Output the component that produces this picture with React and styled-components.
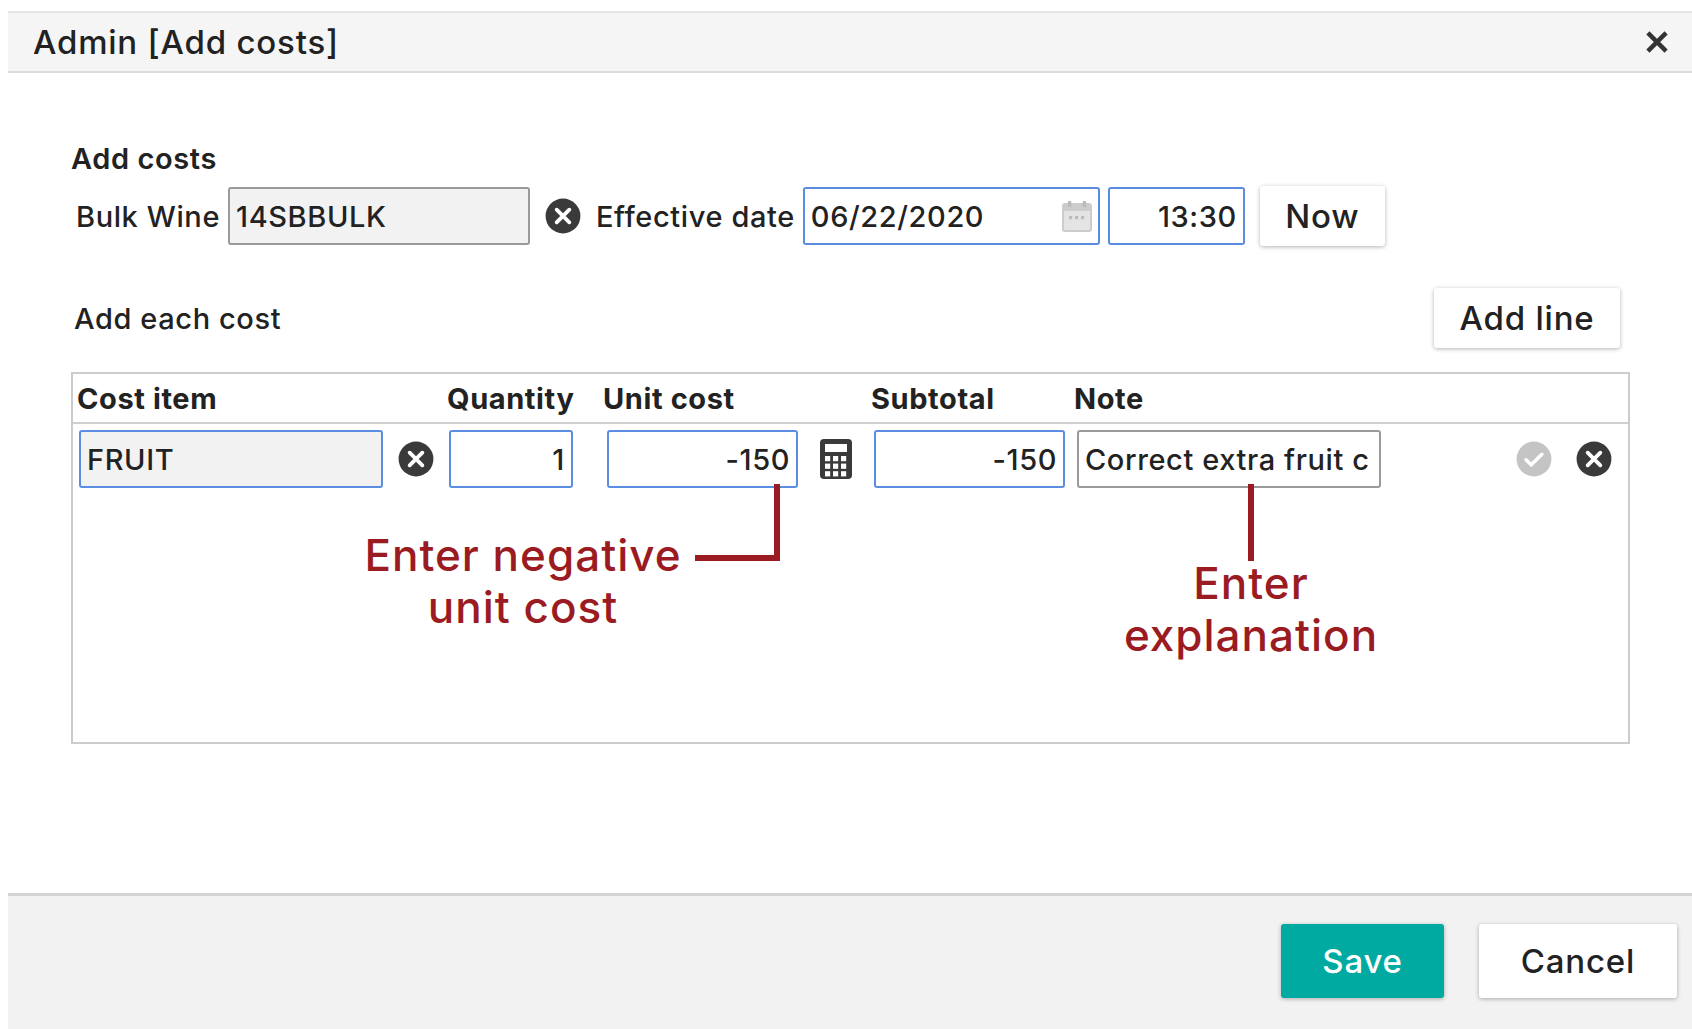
import React from "react";
import styled, { createGlobalStyle } from "styled-components";

const G = createGlobalStyle`
  html,body{margin:0;padding:0;background:#fff;}
  body{padding:11px 0 0 8px;font-family:Inter,"Noto Sans",sans-serif;color:#222;letter-spacing:0.6px;}
`;
const Dialog = styled.div`width:1684px;height:1018px;display:flex;flex-direction:column;border-top:2px solid #e4e4e4;`;
const Header = styled.div`height:58px;background:#f5f5f5;border-bottom:2px solid #dcdcdc;display:flex;align-items:center;justify-content:space-between;padding:0 22px 0 25px;`;
const Title = styled.div`font-size:33px;font-weight:500;letter-spacing:0.8px;`;
const Body = styled.div`flex:1;padding:68px 72px 0 63px;position:relative;`;
const Section = styled.div`font-size:29px;font-weight:600;margin-bottom:10px;`;
const Row = styled.div`display:flex;align-items:center;gap:${p=>p.gap||8}px;`;
const Label = styled.span`font-size:29px;font-weight:500;margin-left:${p=>p.ml||0}px;`;
const Input = styled.div`box-sizing:border-box;width:${p=>p.w}px;height:${p=>p.h||58}px;border:2px solid ${p=>p.blue?"#5b8de0":"#9a9a9a"};border-radius:3px;background:${p=>p.bg||"#fff"};display:flex;align-items:center;justify-content:${p=>p.right?"flex-end":"space-between"};padding:0 6px;font-size:29px;font-weight:500;white-space:nowrap;overflow:hidden;`;
const Btn = styled.button`font-family:inherit;letter-spacing:0.8px;font-size:33px;font-weight:500;color:${p=>p.primary?"#fff":"#222"};background:${p=>p.primary?"#00aaa0":"#fff"};border:none;border-radius:3px;box-shadow:0 1px 4px rgba(0,0,0,.3);width:${p=>p.w}px;height:${p=>p.h}px;`;
const SubRow = styled.div`display:flex;justify-content:space-between;align-items:center;margin:42px 0 24px 3px;`;
const Table = styled.div`box-sizing:border-box;width:1559px;height:372px;border:2px solid #ccc;position:relative;`;
const THead = styled.div`display:flex;height:48px;align-items:center;border-bottom:2px solid #d0d0d0;font-size:29px;font-weight:700;padding-left:4px;`;
const Th = styled.div`width:${p=>p.w}px;`;
const TRow = styled.div`display:flex;align-items:center;padding:6px 0 0 6px;`;
const Gap = styled.div`width:${p=>p.w}px;display:flex;justify-content:center;`;
const Note = styled.div`position:absolute;color:#9b1b22;font-size:44px;font-weight:500;letter-spacing:1px;text-align:center;line-height:52px;left:${p=>p.x}px;top:${p=>p.y}px;width:${p=>p.w}px;`;
const Line = styled.div`position:absolute;background:#9b1b22;left:${p=>p.x}px;top:${p=>p.y}px;width:${p=>p.w}px;height:${p=>p.h}px;`;
const Footer = styled.div`height:129px;background:#f2f2f2;border-top:3px solid #d4d4d4;display:flex;justify-content:flex-end;align-items:center;gap:35px;padding:0 15px 6px 0;`;

const XCircle = ({c="#3a3a3a",s=38}) => (
  <svg width={s} height={s} viewBox="0 0 24 24"><circle cx="12" cy="12" r="11" fill={c}/><path d="M8 8l8 8M16 8l-8 8" stroke="#fff" strokeWidth="2.4" strokeLinecap="round"/></svg>
);
const Check = () => (
  <svg width="38" height="38" viewBox="0 0 24 24"><circle cx="12" cy="12" r="11" fill="#c4c4c4"/><path d="M7 12.5l3.2 3.2L17 9" stroke="#fff" strokeWidth="2.2" fill="none" strokeLinecap="round"/></svg>
);
const Calc = () => (
  <svg width="34" height="42" viewBox="0 0 17 21"><rect x="0.5" y="0.5" width="16" height="20" rx="2" fill="#3a3a3a"/><rect x="3" y="3" width="11" height="4" fill="#fff"/>{[0,1,2].map(r=>[0,1,2].map(c=><rect key={r+"-"+c} x={3+c*4} y={9+r*3.8} width="2.6" height="2.6" fill="#fff"/>))}</svg>
);
const CalIcon = () => (
  <svg width="30" height="32" viewBox="0 0 15 16"><rect x="0.5" y="2" width="14" height="13.5" rx="1" fill="#e4e4e4" stroke="#ccc"/><rect x="0.5" y="2" width="14" height="3.5" fill="#ccc"/><rect x="3" y="0.5" width="1.6" height="3" fill="#bbb"/><rect x="10.4" y="0.5" width="1.6" height="3" fill="#bbb"/>{[0,1,2].map(i=><rect key={i} x={3.5+i*3} y="8" width="1.6" height="1.6" fill="#bbb"/>)}</svg>
);

export default function App(){
  return (<>
    <G/>
    <Dialog>
      <Header><Title>Admin [Add costs]</Title>
        <svg width="26" height="26" viewBox="0 0 20 20"><path d="M3 3l14 14M17 3L3 17" stroke="#333" strokeWidth="3.4"/></svg>
      </Header>
      <Body>
        <Section>Add costs</Section>
        <Row gap={8}>
          <Label ml={5}>Bulk Wine</Label>
          <Input w={302} bg="#f2f2f2">14SBBULK</Input>
          <Gap w={50}><XCircle/></Gap>
          <Label>Effective date</Label>
          <Input w={297} blue>06/22/2020<CalIcon/></Input>
          <Input w={137} blue right>13:30</Input>
          <Btn w={125} h={60} style={{marginLeft:7}}>Now</Btn>
        </Row>
        <SubRow><Label>Add each cost</Label><Btn w={186} h={60}>Add line</Btn></SubRow>
        <Table>
          <THead><Th w={370}>Cost item</Th><Th w={156}>Quantity</Th><Th w={268}>Unit cost</Th><Th w={203}>Subtotal</Th><Th w={200}>Note</Th></THead>
          <TRow>
            <Input w={304} h={58} blue bg="#f2f2f2">FRUIT</Input>
            <Gap w={66}><XCircle/></Gap>
            <Input w={124} blue right>1</Input>
            <Gap w={34}/>
            <Input w={191} blue right>-150</Input>
            <Gap w={76}><Calc/></Gap>
            <Input w={191} blue right>-150</Input>
            <Gap w={12}/>
            <Input w={304}>Correct extra fruit c</Input>
            <Gap w={134}/>
            <Check/><Gap w={22}/><XCircle/>
          </TRow>
          <Line x={701} y={110} w={6} h={77}/>
          <Line x={622} y={181} w={85} h={6}/>
          <Note x={280} y={155} w={340}>Enter negative<br/>unit cost</Note>
          <Line x={1175} y={110} w={6} h={77}/>
          <Note x={1003} y={183} w={350}>Enter<br/>explanation</Note>
        </Table>
      </Body>
      <Footer><Btn primary w={163} h={74}>Save</Btn><Btn w={198} h={74}>Cancel</Btn></Footer>
    </Dialog>
  </>);
}
